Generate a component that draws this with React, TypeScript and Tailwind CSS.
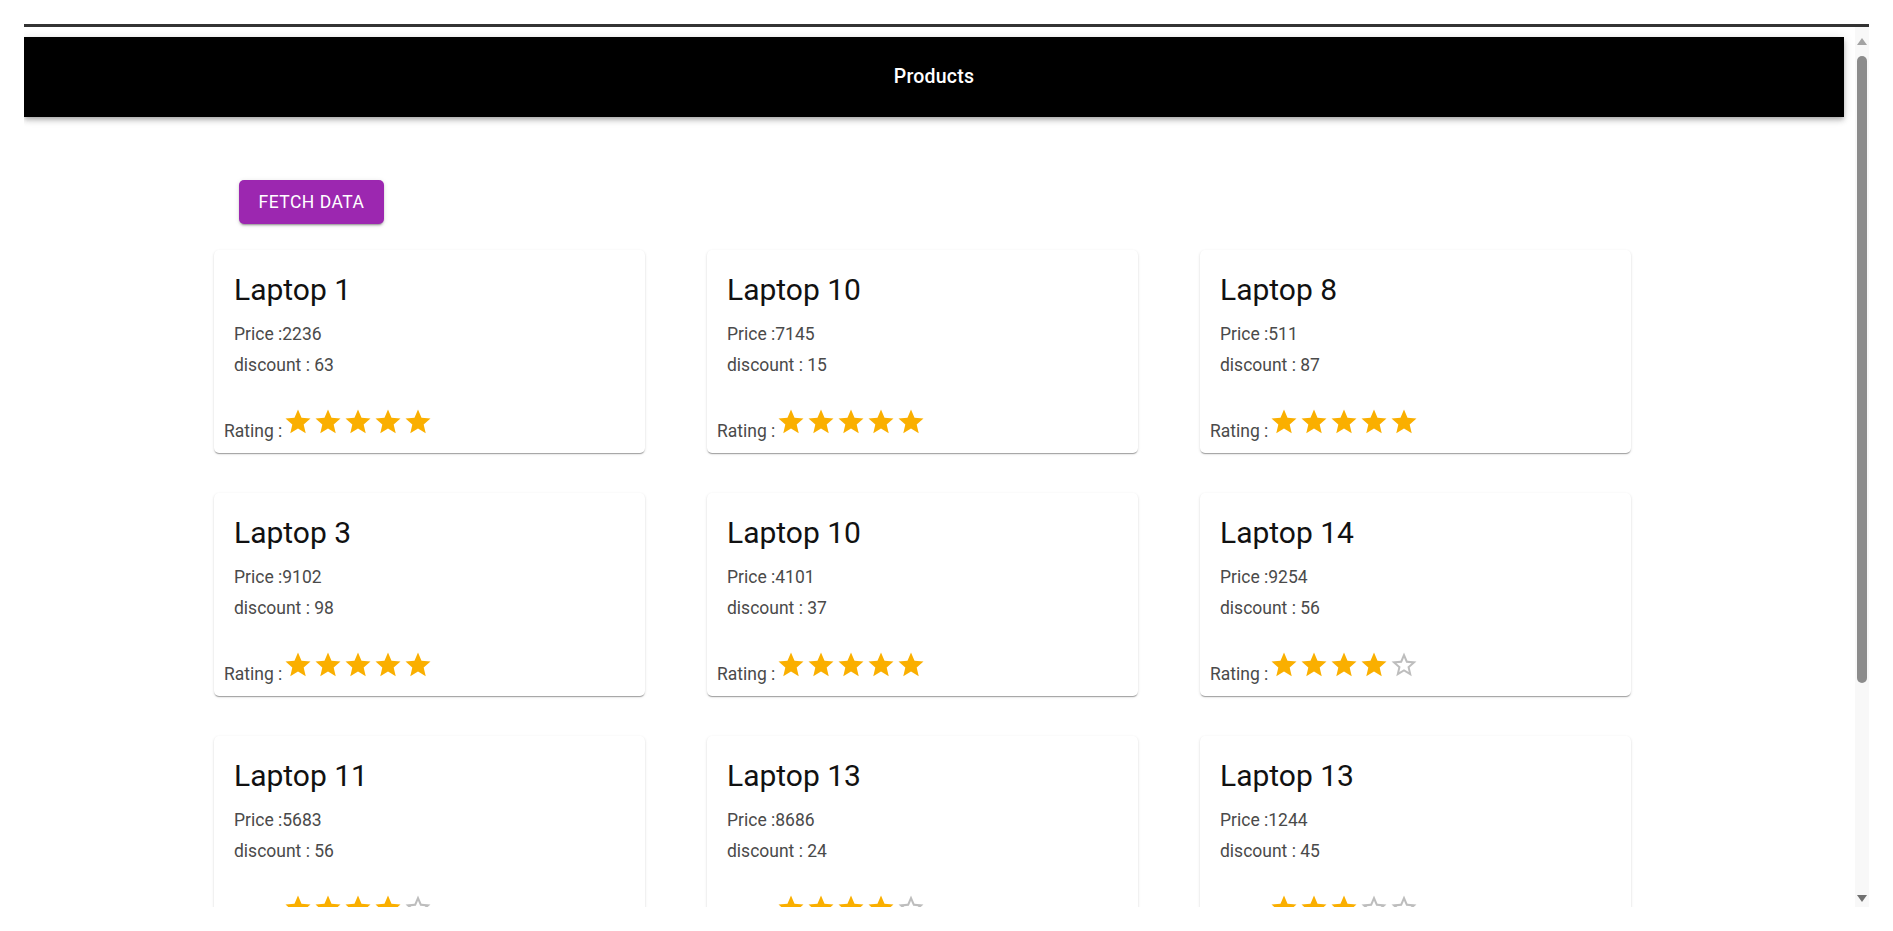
import React from "react";

type Product = { name: string; price: number; discount: number; rating: number };

const products: Product[] = [
  { name: "Laptop 1", price: 2236, discount: 63, rating: 5 },
  { name: "Laptop 10", price: 7145, discount: 15, rating: 5 },
  { name: "Laptop 8", price: 511, discount: 87, rating: 5 },
  { name: "Laptop 3", price: 9102, discount: 98, rating: 5 },
  { name: "Laptop 10", price: 4101, discount: 37, rating: 5 },
  { name: "Laptop 14", price: 9254, discount: 56, rating: 4 },
  { name: "Laptop 11", price: 5683, discount: 56, rating: 4 },
  { name: "Laptop 13", price: 8686, discount: 24, rating: 4 },
  { name: "Laptop 13", price: 1244, discount: 45, rating: 3 },
];

function Star({ filled }: { filled: boolean }) {
  return (
    <svg viewBox="0 0 24 24" className="w-[30px] h-[30px] block" aria-hidden="true">
      {filled ? (
        <path fill="#faaf00" d="M12 17.27L18.18 21l-1.64-7.03L22 9.24l-7.19-.61L12 2 9.19 8.63 2 9.24l5.46 4.73L5.82 21z" />
      ) : (
        <path
          fill="rgba(0,0,0,0.26)"
          d="M22 9.24l-7.19-.62L12 2 9.19 8.63 2 9.24l5.46 4.73L5.82 21 12 17.27 18.18 21l-1.63-7.03L22 9.24zM12 15.4l-3.76 2.27 1-4.28-3.32-2.88 4.38-.38L12 6.1l1.71 4.04 4.38.38-3.32 2.88 1 4.28L12 15.4z"
        />
      )}
    </svg>
  );
}

function Card({ p }: { p: Product }) {
  return (
    <div className="flex flex-col h-[203px] bg-white rounded-[5px] shadow-[0px_2px_1px_-1px_rgba(0,0,0,0.2),0px_1px_1px_0px_rgba(0,0,0,0.14),0px_1px_3px_0px_rgba(0,0,0,0.12)]">
      <div className="px-[20px] pt-[20px]">
        <div className="text-[30px] leading-[40px] text-[#111111]">{p.name}</div>
        <div className="mt-[9px] text-[17.5px] leading-[31px] text-[#4a4a4a]">Price :{p.price}</div>
        <div className="text-[17.5px] leading-[31px] text-[#4a4a4a]">discount : {p.discount}</div>
      </div>
      <div className="mt-auto pl-[10px] pb-[9px] text-[17.5px] leading-[25px] text-[#4a4a4a]">
        Rating :
        <span className="inline-flex ml-[1px]">
          {[0, 1, 2, 3, 4].map((i) => (
            <Star key={i} filled={i < p.rating} />
          ))}
        </span>
      </div>
    </div>
  );
}

export default function App() {
  return (
    <div className="min-h-screen bg-white pt-6 pl-6 font-['Roboto','Liberation_Sans',sans-serif]">
      <div className="w-[1845px] h-[883px] border-t-[3px] border-[#333333] flex">
        <div className="flex-1 overflow-hidden">
          <div className="mt-[10px] mr-[11px] h-[80px] bg-black flex items-center justify-center shadow-[0px_2px_4px_-1px_rgba(0,0,0,0.2),0px_4px_5px_0px_rgba(0,0,0,0.14),0px_1px_10px_0px_rgba(0,0,0,0.12)]">
            <span className="text-white text-[19.5px] font-medium tracking-[0.2px]">Products</span>
          </div>
          <div className="mt-[63px] ml-[215px]">
            <button className="w-[145px] h-[44px] rounded-[5px] bg-[#9c27b0] text-white text-[17.5px] font-normal tracking-[0.5px] uppercase flex items-center justify-center shadow-[0px_3px_1px_-2px_rgba(0,0,0,0.2),0px_2px_2px_0px_rgba(0,0,0,0.14),0px_1px_5px_0px_rgba(0,0,0,0.12)]">
              Fetch Data
            </button>
          </div>
          <div className="mt-[26px] ml-[190px] grid grid-cols-[431px_431px_431px] gap-x-[62px] gap-y-[40px]">
            {products.map((p, i) => (
              <Card key={i} p={p} />
            ))}
          </div>
        </div>
        <div className="w-[14px] bg-[#f8f8f8] flex flex-col items-center pt-[11px] pb-[5px]">
          <div className="w-0 h-0 border-l-[5px] border-r-[5px] border-b-[7px] border-l-transparent border-r-transparent border-b-[#a3a3a3]" />
          <div className="mt-[11px] w-[10px] h-[627px] rounded-full bg-[#8c8c8c]" />
          <div className="flex-1" />
          <div className="w-0 h-0 border-l-[5px] border-r-[5px] border-t-[7px] border-l-transparent border-r-transparent border-t-[#707070]" />
        </div>
      </div>
    </div>
  );
}
